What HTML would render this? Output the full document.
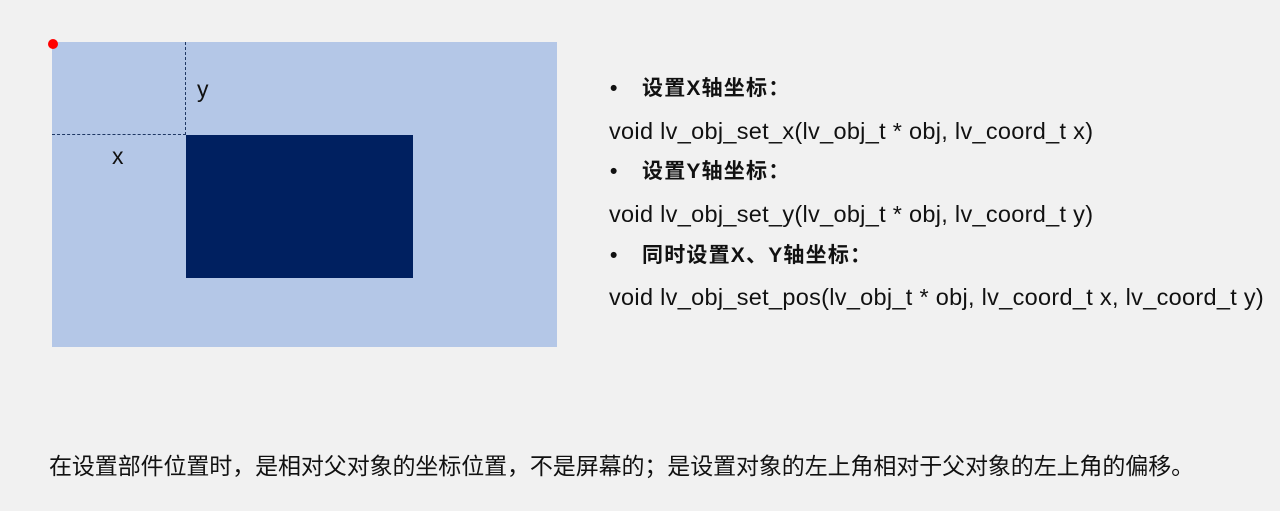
<!DOCTYPE html>
<html><head><meta charset="utf-8"><style>
body{margin:0;width:1280px;height:511px;background:#f1f1f1;position:relative;overflow:hidden;font-family:"Liberation Sans","Noto Sans CJK SC",sans-serif;color:#111}
.a{position:absolute;white-space:nowrap}
.h{font-weight:bold;font-size:21px;line-height:24px;letter-spacing:1.2px}
.c{font-size:23.5px;line-height:24px;letter-spacing:0.3px}
</style></head><body>
<div class="a" style="left:52px;top:42px;width:505px;height:305px;background:#b4c7e7"></div>
<div class="a" style="left:186px;top:135px;width:227px;height:143px;background:#002060"></div>
<div class="a" style="left:185px;top:42px;height:93px;border-left:1px dashed #1f3864"></div>
<div class="a" style="left:52px;top:134px;width:134px;border-top:1px dashed #1f3864"></div>
<div class="a" style="left:48px;top:39px;width:10px;height:10px;border-radius:50%;background:#f00"></div>
<div class="a" style="left:197px;top:76px;font-size:23px">y</div>
<div class="a" style="left:112px;top:143px;font-size:23px">x</div>

<div class="a h" style="left:610px;top:77px">•</div>
<div class="a h" style="left:642px;top:77px">设置X轴坐标：</div>
<div class="a c" style="left:609px;top:119px">void lv_obj_set_x(lv_obj_t * obj, lv_coord_t x)</div>
<div class="a h" style="left:610px;top:160px">•</div>
<div class="a h" style="left:642px;top:160px">设置Y轴坐标：</div>
<div class="a c" style="left:609px;top:202px">void lv_obj_set_y(lv_obj_t * obj, lv_coord_t y)</div>
<div class="a h" style="left:610px;top:244px">•</div>
<div class="a h" style="left:642px;top:244px">同时设置X、Y轴坐标：</div>
<div class="a c" style="left:609px;top:285px">void lv_obj_set_pos(lv_obj_t * obj, lv_coord_t x, lv_coord_t y)</div>

<div class="a" style="left:49px;top:452px;font-size:23px;line-height:28px;letter-spacing:-0.1px">在设置部件位置时，是相对父对象的坐标位置，不是屏幕的；是设置对象的左上角相对于父对象的左上角的偏移。</div>
</body></html>
